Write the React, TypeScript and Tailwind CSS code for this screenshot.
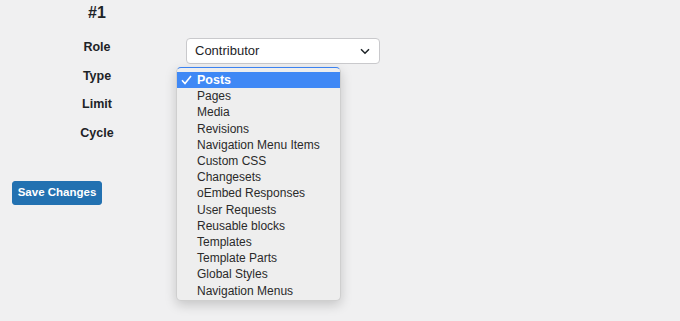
import React from 'react';

const types = [
  'Posts',
  'Pages',
  'Media',
  'Revisions',
  'Navigation Menu Items',
  'Custom CSS',
  'Changesets',
  'oEmbed Responses',
  'User Requests',
  'Reusable blocks',
  'Templates',
  'Template Parts',
  'Global Styles',
  'Navigation Menus',
];

const labels = ['Role', 'Type', 'Limit', 'Cycle'];

const App: React.FC = () => {
  return (
    <div
      className="w-[680px] h-[321px] bg-[#f0f0f1] text-[#1d2327] overflow-hidden pl-3"
      style={{ fontFamily: '"Liberation Sans", Arial, sans-serif' }}
    >
      <div className="flex">
        <div className="w-[170px] flex flex-col items-center">
          <h2 className="h-[26px] pt-[3px] text-[16px] font-bold leading-[20px]">#1</h2>
          {labels.map((l) => (
            <div key={l} className="h-[28.7px] flex items-start pt-[13px] text-[12.5px] font-bold leading-[16px]">
              {l}
            </div>
          ))}
        </div>
        <div className="relative pl-1 pt-[38px]">
          <div className="w-[194px] h-[26px] bg-white border border-[#c9c9cc] rounded-[4px] flex items-center justify-between pl-2 pr-[9px] text-[13px]">
            <span>Contributor</span>
            <svg width="10" height="7" viewBox="0 0 10 7" fill="none">
              <path d="M1 1.2l4 4 4-4" stroke="#1d2327" strokeWidth="1.5" />
            </svg>
          </div>
          <div className="absolute left-[-6px] top-[67px] w-[165px] h-[234px] bg-[#eeeeee] border border-[#cfcfcf] border-t-[#3b82f0] rounded-[5px] shadow-[0_4px_12px_rgba(0,0,0,0.18)] pt-[4px]">
            {types.map((t, i) => (
              <div
                key={t}
                className={
                  i === 0
                    ? 'h-[16.2px] flex items-center bg-[#3f88f5] text-white font-bold text-[12.5px]'
                    : 'h-[16.2px] flex items-center text-[#2a2a2a] text-[12px]'
                }
              >
                <span className="w-[20px] pl-[4px] flex items-center">
                  {i === 0 && (
                    <svg width="11" height="10" viewBox="0 0 11 10" fill="none">
                      <path d="M1 5.2l3 3.3L10 1" stroke="white" strokeWidth="1.6" />
                    </svg>
                  )}
                </span>
                <span>{t}</span>
              </div>
            ))}
          </div>
        </div>
      </div>
      <button className="mt-[40px] w-[90px] h-[24px] bg-[#2271b1] border border-[#2271b1] rounded-[3px] text-white text-[11.5px] font-bold">
        Save Changes
      </button>
    </div>
  );
};

export default App;
